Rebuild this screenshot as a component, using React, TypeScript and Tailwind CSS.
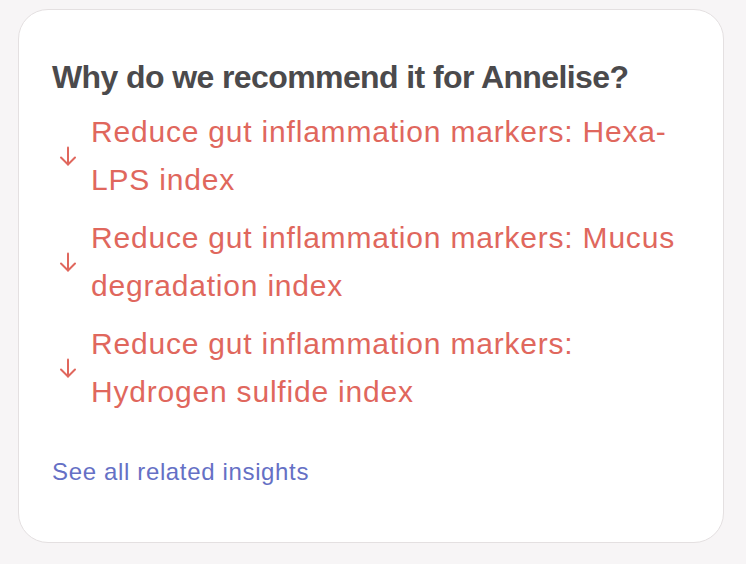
import React from 'react';

const items = [
  'Reduce gut inflammation markers: Hexa-LPS index',
  'Reduce gut inflammation markers: Mucus degradation index',
  'Reduce gut inflammation markers: Hydrogen sulfide index',
];

function ArrowDown() {
  return (
    <svg width="18" height="20" viewBox="0 0 18 20" fill="none" stroke="currentColor" strokeWidth="2" strokeLinecap="round" strokeLinejoin="round">
      <path d="M9 1.5v17" />
      <path d="M2 11.5l7 7 7-7" />
    </svg>
  );
}

export default function App() {
  return (
    <div className="min-h-[564px] bg-[#f7f5f6] px-[18px] pt-[9px]" style={{ fontFamily: '"Liberation Sans", Arial, sans-serif' }}>
      <div className="w-[706px] h-[534px] bg-white border border-[#e4e0e1] rounded-[30px] pl-[33px] pr-[30px] pt-[47px]">
        <h2 className="text-[32px] leading-[40px] font-bold text-[#4b4a4c] tracking-[-0.6px]">
          Why do we recommend it for Annelise?
        </h2>
        <ul className="mt-[11px] flex flex-col gap-[10px]">
          {items.map((t) => (
            <li key={t} className="flex items-center text-[#e0675d]">
              <span className="w-[32px] mr-[7px] shrink-0 flex justify-center">
                <ArrowDown />
              </span>
              <span className="text-[30px] leading-[48px] tracking-[0.8px] max-w-[600px]">{t}</span>
            </li>
          ))}
        </ul>
        <a href="#" className="block mt-[40px] text-[24px] leading-[32px] tracking-[0.65px] text-[#6570c5]">
          See all related insights
        </a>
      </div>
    </div>
  );
}
